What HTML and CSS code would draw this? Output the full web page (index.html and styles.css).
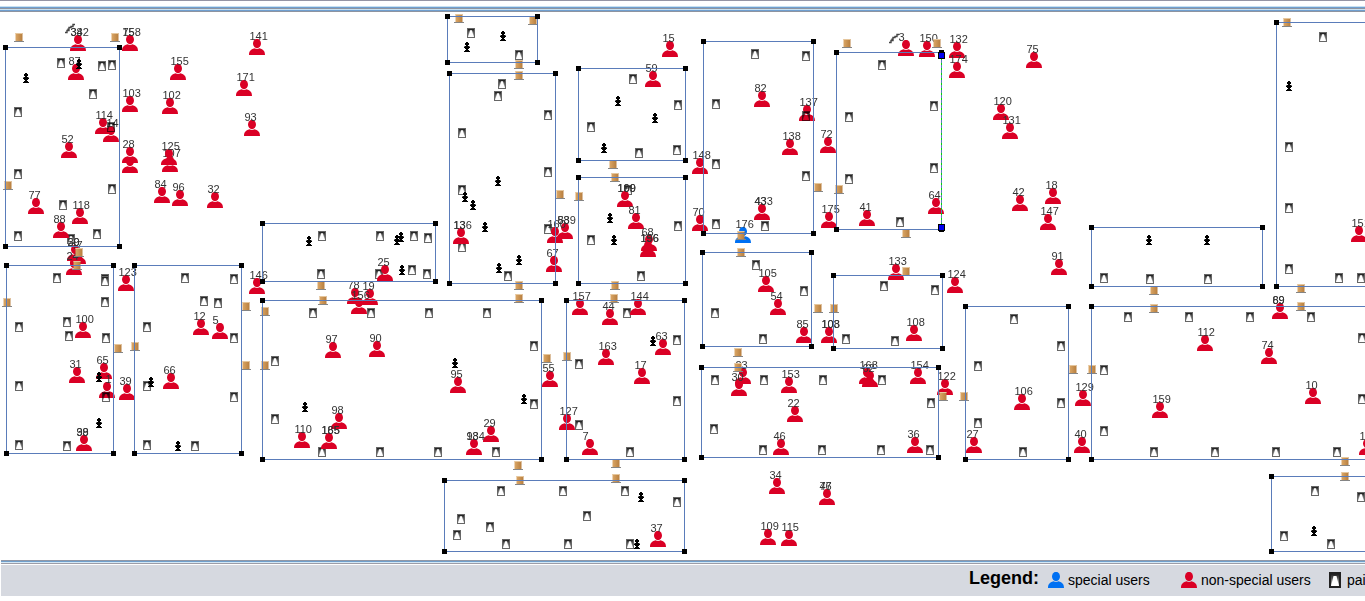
FILE: index.html
```html
<!DOCTYPE html>
<html lang="en">
<head>
<meta charset="utf-8">
<title>Museum floor plan</title>
<link rel="stylesheet" href="styles.css">
</head>
<body>
<div class="app">
  <header class="top-edge"></header>
  <main class="stage">
    <svg class="plan" viewBox="0 12 1365 548" width="1365" height="548">
      <defs>
        <symbol id="user" viewBox="0 0 16 16">
          <ellipse cx="8" cy="4.500" rx="4" ry="4.700"/>
          <path d="M0 16C0 12.500 1.500 10.300 5.500 9.300Q8 10.800 10.500 9.300C14.500 10.300 16 12.500 16 16Z"/>
        </symbol>
        <linearGradient id="shade" x1="0" y1="0" x2="0" y2="1">
          <stop offset="0" stop-color="#111"/>
          <stop offset="1" stop-color="#ccc"/>
        </linearGradient>
        <symbol id="painting" viewBox="0 0 8 10">
          <rect x=".5" y=".5" width="7" height="9" fill="url(#shade)" stroke="#666"/>
          <path d="M3 2.300h2L6 6l1 3H1l1-3z" fill="#fff"/>
        </symbol>
        <symbol id="sculpture" viewBox="0 0 6 10">
          <path d="M2 0h2v1h1v2H4v1h1v.5h1v1.500H5v1H4v1h1v1h1v1H0V9h1V8h1V7H1V6H0V4.500h1V4h1V3H1V1h1z"/>
        </symbol>
        <linearGradient id="wood">
          <stop offset="0" stop-color="#dba767"/>
          <stop offset="1" stop-color="#b77e3e"/>
        </linearGradient>
        <symbol id="door" viewBox="0 0 10 9">
          <rect x="1.500" y="0" width="7" height="8" fill="url(#wood)"/>
          <path d="M1.500.5h7" stroke="#e5c69d"/>
          <path d="M0 8.500h10" stroke="#858585"/>
        </symbol>
      </defs>
    </svg>
  </main>
  <footer class="legend">
    <div class="legend-row">
      <strong class="legend-title">Legend:</strong>
      <span class="legend-item special"><svg class="icon-user is-special"><use href="#user"/></svg>special users</span>
      <span class="legend-item regular"><svg class="icon-user"><use href="#user"/></svg>non-special users</span>
      <span class="legend-item art"><svg class="icon-art" viewBox="0 0 12 16"><rect x="1" y="1" width="10" height="14" fill="url(#shade)" stroke="#222" stroke-width="2"/><path d="M4.500 4h3L9 10l1 4H2l1-4z" fill="#fff"/></svg>paintings</span>
    </div>
  </footer>
</div>
<script src="plan.js"></script>
</body>
</html>
```
FILE: styles.css
```css
body { margin: 0; background: #fff; overflow: hidden; font-family: "Liberation Sans", Arial, sans-serif; }
.app { display: flex; flex-direction: column; width: 1365px; height: 601px; overflow: hidden; }
.top-edge {
  flex: 0 0 12px;
  background: linear-gradient(#9494a4 0 1px, #fff 1px 6px, #c8e0f0 6px 7px, #6f9fd0 7px 8px, #8e94a0 8px 9px, #c8e0f0 9px 10px, #6f9fd0 10px 11px, #8e94a0 11px 12px);
}
.stage { flex: 0 0 548px; }
.plan { display: block; }
.room { fill: none; stroke: #5a7cba; stroke-width: 1; }
.handle { fill: #000; }
.user { fill: #da0025; }
.user.special { fill: #0070f2; }
.label { font-size: 11px; fill: #333; }
.overlay { mix-blend-mode: multiply; }
.stairs { fill: none; stroke: #444; stroke-width: 1.4; }
.selected-wall { stroke: #00e000; stroke-dasharray: 2 3; }
.selected-handle { fill: #0000f0; stroke: #000; }
.legend {
  flex: 0 0 36px;
  box-sizing: border-box;
  padding-top: 5px;
  background: linear-gradient(#9298a6 0 1px, #70a0cc 1px 2px, #d4e8f6 2px 3px, #9c9ca6 3px 4px, #fff 4px 5px, #d6d9e0 5px);
  box-shadow: inset 1px 0 #fff;
}
.legend-row { display: flex; align-items: flex-start; height: 31px; padding-left: 969px; white-space: nowrap; color: #000; }
.legend-title { flex: 0 0 79px; font-size: 18px; line-height: 20px; margin-top: 3px; }
.legend-item { display: flex; align-items: center; flex: none; gap: 4px; margin-top: 7px; height: 16px; font-size: 14px; line-height: 17px; }
.special { width: 133px; }
.regular { width: 148px; }
.art { gap: 6px; }
.icon-user { width: 16px; height: 16px; fill: #da0025; }
.icon-user.is-special { fill: #0070f2; }
.icon-art { width: 12px; height: 16px; }
```
FILE: plan.js
```js
const NS = 'http://www.w3.org/2000/svg';
const plan = document.querySelector('.plan');

function add(tag, attrs, text) {
  const el = document.createElementNS(NS, tag);
  for (const key in attrs) el.setAttribute(key, attrs[key]);
  if (text) el.textContent = text;
  plan.appendChild(el);
}

function place(kind, w, h, list, cls) {
  list.trim().split(/\s+/).forEach(pair => {
    const [x, y] = pair.split(',').map(Number);
    add('use', { href: '#' + kind, x: x - Math.floor(w / 2), y: y - Math.floor(h / 2), width: w, height: h, class: cls || kind });
  });
}

// x1, y1, x2, y2 of each room outline
const rooms = [
  [5,47,119,246],[6,265,113,453],[134,265,241,453],[262,223,435,281],[262,300,541,459],
  [447,16,537,62],[449,73,555,283],[578,68,685,160],[578,177,685,283],[566,300,684,459],
  [703,41,813,233],[836,52,941,229],[702,252,811,346],[833,275,942,348],[701,367,938,457],
  [965,306,1068,459],[1091,227,1262,286],[1276,22,1400,286],[1091,306,1400,459],
  [444,480,684,551],[1271,476,1400,551]
];

const paintings = `61,63 102,66 112,65 93,94 18,112 18,174 112,189 63,205 18,236 97,234 71,239
57,278 105,279 105,281 105,302 67,322 69,336 19,327 106,338 19,386 19,445 67,446
185,278 234,279 204,301 218,303 147,327 234,338 147,386 234,397 147,445 195,446
322,236 380,236 414,236 428,238 321,274 379,274 412,270 427,274
313,313 371,313 429,313 487,313 534,346 534,404 275,361 275,419 322,452 380,452 438,452 496,452
471,33 519,55 502,84 498,96 548,115 462,133 548,172 462,190 462,247 548,229 508,276
633,79 678,105 591,127 639,153 677,150 628,190 678,226 591,240 641,276
627,313 677,340 579,364 677,401 579,425 630,452 716,164 716,224
755,54 806,56 716,104 806,176 765,226 882,65 934,106 849,117 934,168 849,179 900,222
756,265 804,291 715,313 763,339 884,286 935,290 846,339 895,341
715,380 764,380 823,380 882,380 931,403 714,429 763,450 822,450 881,450 930,450
1014,319 1061,346 978,366 1061,403 978,423 1023,452 1104,278 1150,279 1208,279
1289,208 1289,269 1339,278 1289,147 1323,37 1128,317 1189,317 1250,317 1311,317
1362,338 1362,399 1104,370 1104,431 1154,452 1215,452 1276,452 1337,452 1361,278
501,491 563,491 625,491 677,502 461,519 490,527 457,535 506,544 587,516 568,544 630,544
1315,491 1361,497 1284,536 1331,544`;

const sculptures = `26,78 79,64 99,377 99,423 151,382 178,446 309,241 401,237 397,240 402,270
455,363 524,399 305,407 503,36 467,47 498,181 465,197 473,205 485,227 519,260 499,268
618,101 655,118 604,148 610,218 614,240 653,341 1149,240 1207,240 1289,86 641,497 637,544 1314,531`;

const doors = `19,37 115,37 8,185 79,252 77,265 7,302 118,348 135,346 246,306 246,365
321,285 323,300 265,311 265,365 518,465 519,285 519,298 459,18 533,20 519,64 519,75
560,194 579,196 613,164 615,177 615,285 614,298 547,358 567,356 616,463 520,480 616,478
847,43 937,43 818,187 839,189 906,233 741,235 741,252 738,352 738,367 818,308 834,308
906,271 943,396 964,396 1154,290 1154,308 1301,288 1301,306 1073,369 1092,369 1345,461 1345,476 1287,22`;

// centre x, top y, label, optional second label sharing the spot, optional label shift
const users = [
  [78,35,'342','38'],[130,35,'158','75'],[178,64,'155'],[244,80,'171'],[257,39,'141'],
  [76,64,'87'],[130,96,'103'],[170,98,'102'],[103,118,'114'],[111,126,'14','',3],[252,120,'93'],
  [69,142,'52'],[130,157,''],[130,147,'28'],[170,156,'107'],[169,149,'125'],[162,187,'84'],
  [180,190,'96'],[215,192,'32'],[36,198,'77'],[80,208,'118'],[61,222,'88'],
  [75,245,'59','20'],[78,248,'47'],[74,259,'24'],[126,275,'123'],[83,322,'100'],[77,367,'31'],
  [104,363,'65'],[107,382,'1','',6],[127,384,'39'],[84,435,'99','38'],[201,319,'12'],[220,323,'5'],
  [171,373,'66'],[257,278,'146'],[385,265,'25'],[355,288,'78'],[370,289,'19'],[359,298,'156'],
  [333,342,'97'],[377,341,'90'],[458,377,'95'],[339,413,'98'],[302,432,'110'],[329,433,'165','185'],
  [491,426,'29'],[474,439,'184','93'],[461,228,'136','13'],[670,41,'15'],[653,71,'59'],
  [625,191,'169','199'],[636,213,'81'],[649,235,'68'],[648,241,'156','196'],
  [565,223,'589','83'],[555,227,'160'],[554,256,'67'],[580,299,'157'],[610,309,'44'],
  [638,299,'144'],[663,339,'63'],[606,349,'163'],[642,368,'17'],[550,371,'55'],[567,414,'127'],
  [590,439,'7'],[700,158,'148'],[700,215,'70'],[743,227,'176'],[743,368,'23'],[739,380,'30'],
  [762,91,'82'],[807,105,'137'],[790,139,'138'],[828,137,'72'],[762,204,'433','43'],
  [829,212,'175'],[867,210,'41'],[936,198,'64'],[906,40,'3'],[927,41,'150'],[957,42,'132'],
  [957,62,'174'],[766,276,'105'],[778,299,'54'],[804,327,'85'],[829,327,'103','108'],
  [914,325,'108'],[896,264,'133'],[955,277,'124'],[867,368,'168'],[870,371,'62'],[918,368,'154'],
  [945,379,'122'],[789,377,'153'],[795,406,'22'],[781,439,'46'],[915,437,'36'],[974,437,'27'],
  [1034,52,'75'],[1001,104,'120'],[1010,123,'131'],[1020,195,'42'],[1053,188,'18'],
  [1048,214,'147'],[1059,259,'91'],[1022,394,'106'],[1083,390,'129'],[1082,437,'40'],
  [1160,402,'159'],[1205,335,'112'],[1269,348,'74'],[1280,303,'69','89'],[1313,388,'10'],
  [1359,226,'151'],[1367,439,'16'],[777,478,'34'],[827,489,'76','47'],[768,529,'109'],
  [789,530,'115'],[658,531,'37']
];

place('painting', 8, 10, paintings);
for (const [x, y, label, second, shift] of users) {
  add('use', { href: '#user', x: x - 8, y: y, width: 16, height: 16, class: label === '176' ? 'user special' : 'user' });
  for (const text of [label, second]) {
    if (text) add('text', { x: x - 7.6 + (shift || 0), y: y + 1, class: 'label' }, text);
  }
}
place('painting', 8, 10, '111,127 106,397 806,116', 'overlay');
place('sculpture', 6, 10, sculptures);
place('door', 10, 9, doors);
add('path', { d: 'M65 32.500h2v-2h2v-3h2v-1h2v-2h2M68 30.500v-2', class: 'stairs' });
add('path', { d: 'M889 42.500h2v-2h2v-3h2v-1h2v-2h2M892 40.500v-2', class: 'stairs' });
for (const [x1, y1, x2, y2] of rooms) {
  add('rect', { x: x1 + .5, y: y1 + .5, width: x2 - x1, height: y2 - y1, class: 'room' });
  for (const x of [x1, x2]) for (const y of [y1, y2])
    add('rect', { x: x - 2, y: y - 2, width: 5, height: 5, class: 'handle' });
}
add('path', { d: 'M941.500 58V225', class: 'selected-wall' });
for (const y of [55, 227]) add('rect', { x: 938.5, y: y - 2.5, width: 6, height: 6, class: 'selected-handle' });
```
